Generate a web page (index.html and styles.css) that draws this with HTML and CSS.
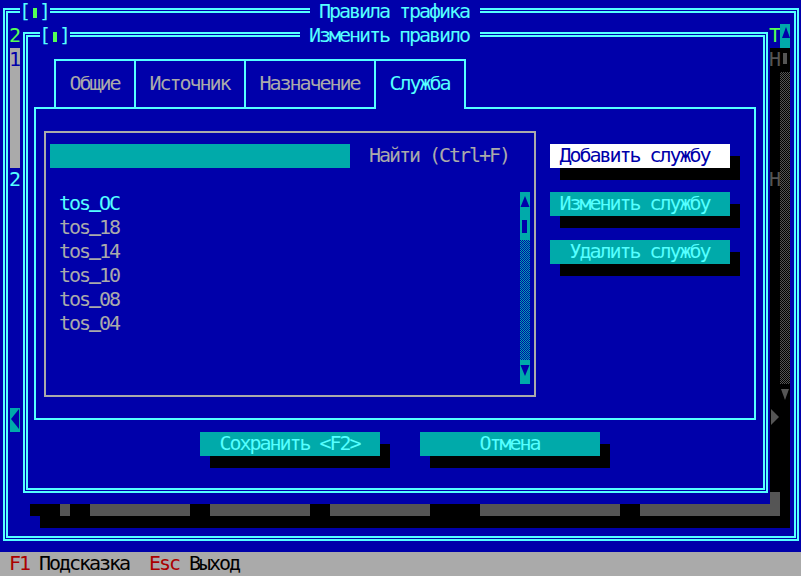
FILE: index.html
```html
<!DOCTYPE html>
<html lang="ru">
<head>
    <meta charset="UTF-8">
    <meta name="viewport" content="width=device-width, initial-scale=1.0">
    <title>Правила трафика</title>
    <link rel="stylesheet" href="styles.css">
</head>
<body>
    <div class="screen">
        <!-- Background window: Правила трафика -->
        <div class="frame outer-frame"></div>
        <div class="marker outer-marker">[<i class="grip"></i>]</div>
        <div class="caption outer-caption">Правила трафика</div>

        <div class="win-num">2</div>
        <div class="list-bar">1</div>
        <div class="list-num">2</div>
        <div class="left-arrow">
            <svg class="icon" width="10" height="24" viewBox="0 0 10 24"><path d="M9 1v20L1 11z" fill="#0000aa"/></svg>
        </div>

        <div class="win-t">T</div>
        <div class="win-up">
            <svg class="icon" width="10" height="24" viewBox="0 0 10 24"><path d="M6 3l4 11H2z" fill="#0000aa"/></svg>
        </div>

        <!-- Dialog shadow over the background window -->
        <div class="shadow-col">
            <span class="dim dim-h1">H</span>
            <span class="dim-bar"><i></i></span>
            <span class="dim-track"></span>
            <span class="dim dim-h2">H</span>
            <span class="dim-down">
                <svg class="icon" width="10" height="24" viewBox="0 0 10 24"><path d="M1 5h8l-4 11z" fill="#555555"/></svg>
            </span>
            <span class="dim-right">
                <svg class="icon" width="10" height="24" viewBox="0 0 10 24"><path d="M1 1v16l8-8z" fill="#555555"/></svg>
            </span>
            <span class="dim-half"></span>
        </div>
        <div class="shadow-row">
            <span class="sh-edge w1"></span>
            <span class="sh w2"></span>
            <span class="sh-top w1"></span>
            <span class="sh w2"></span>
            <span class="sh-top w10"></span>
            <span class="sh w2"></span>
            <span class="sh-top w10"></span>
            <span class="sh w2"></span>
            <span class="sh-top w10"></span>
            <span class="sh w5"></span>
            <span class="sh-top w14"></span>
            <span class="sh w2"></span>
            <span class="sh-top w14"></span>
            <span class="sh w1"></span>
        </div>

        <!-- Dialog: Изменить правило -->
        <div class="dialog">
            <div class="frame"></div>
            <div class="marker dlg-marker">[<i class="grip"></i>]</div>
            <div class="caption dlg-caption">Изменить правило</div>

            <div class="panel"></div>
            <div class="tabs">
                <div class="tab tab-general">Общие</div>
                <div class="tab tab-source">Источник</div>
                <div class="tab tab-target">Назначение</div>
                <div class="tab tab-service active">Служба</div>
            </div>

            <div class="group"></div>
            <div class="search"></div>
            <div class="search-label">Найти (Ctrl+F)</div>

            <ul class="list">
                <li class="selected">tos<span class="us">_</span>OC</li>
                <li>tos<span class="us">_</span>18</li>
                <li>tos<span class="us">_</span>14</li>
                <li>tos<span class="us">_</span>10</li>
                <li>tos<span class="us">_</span>08</li>
                <li>tos<span class="us">_</span>04</li>
            </ul>

            <div class="scroll">
                <div class="sb-cell">
                    <svg class="icon" width="10" height="24" viewBox="0 0 10 24"><path d="M5 4l4.5 11h-9z" fill="#0000aa"/></svg>
                </div>
                <div class="sb-cell"><i class="sb-thumb"></i></div>
                <div class="sb-track"></div>
                <div class="sb-cell">
                    <svg class="icon" width="10" height="24" viewBox="0 0 10 24"><path d="M0.5 5h9L5 16z" fill="#0000aa"/></svg>
                </div>
            </div>

            <div class="actions">
                <button class="btn btn-default pad-odd">Добавить службу</button>
                <button class="btn pad-odd">Изменить службу</button>
                <button class="btn">Удалить службу</button>
            </div>

            <div class="footer">
                <button class="btn">Сохранить &lt;F2&gt;</button>
                <button class="btn">Отмена</button>
            </div>
        </div>
    </div>

    <div class="status"> <span class="key">F1</span> Подсказка  <span class="key">Esc</span> Выход</div>
</body>
</html>
```

FILE: styles.css
```css
* {
    box-sizing: border-box;
}

body {
    margin: 0;
    width: 801px;
    height: 576px;
    overflow: hidden;
    background: #0000aa;
    color: #aaaaaa;
    font-family: "DejaVu Sans Mono", monospace;
    font-size: 20px;
    letter-spacing: -2.041px;
    line-height: 22px;
    text-indent: -1px;
}

/* 80 x 23 character cells, 10 x 24 px each */
.screen {
    display: grid;
    grid-template-columns: repeat(79, 10px) 11px;
    grid-template-rows: repeat(23, 24px);
}

.icon {
    display: block;
}

.frame {
    grid-area: 1 / 1 / -1 / -1;
    margin: 8px 2px 11px 3px;
    border: 5px double #55ffff;
}

.outer-frame {
    grid-area: 1 / 1 / 24 / 81;
}

.marker {
    color: #55ffff;
    background: #0000aa;
}

.grip {
    display: inline-block;
    width: 4px;
    height: 10px;
    margin: 0 2px 0 4px;
    background: #55ff55;
}

.caption {
    color: #55ffff;
    background: #0000aa;
    padding: 0 10px;
}

.outer-marker {
    grid-area: 1 / 3 / 2 / 6;
}

.outer-caption {
    grid-area: 1 / 32 / 2 / 49;
}

/* left edge of the background window */
.win-num {
    grid-area: 2 / 2 / 3 / 3;
    color: #55ff55;
}

.list-bar {
    grid-area: 3 / 2 / 8 / 3;
    background: #aaaaaa;
    color: #0000aa;
}

.list-num {
    grid-area: 8 / 2 / 9 / 3;
    color: #55ffff;
}

.left-arrow {
    grid-area: 18 / 2 / 19 / 3;
    background: #00aaaa;
}

/* right edge of the background window */
.win-t {
    grid-area: 2 / 78 / 3 / 79;
    color: #55ff55;
}

.win-up {
    grid-area: 2 / 79 / 3 / 80;
    background: #00aaaa;
}

.shadow-col {
    grid-area: 3 / 78 / 22 / 80;
    display: grid;
    grid-template-columns: 10px 10px;
    grid-template-rows: repeat(19, 24px);
    background: #000;
}

.dim {
    color: #555555;
}

.dim-h1 {
    grid-area: 1 / 1;
}

.dim-h2 {
    grid-area: 6 / 1;
}

.dim-bar {
    grid-area: 1 / 2;
}

.dim-bar i {
    display: block;
    width: 4px;
    height: 11px;
    margin: 5px 0 0 3px;
    background: #555555;
}

.dim-track {
    grid-area: 2 / 2 / 15 / 3;
    background: repeating-conic-gradient(#555555 0 25%, #000 0 50%) 0 0 / 2px 2px;
}

.dim-down {
    grid-area: 15 / 2;
}

.dim-right {
    grid-area: 16 / 1;
}

.dim-half {
    grid-area: 19 / 1;
    background: linear-gradient(transparent 50%, #555555 50%);
}

.shadow-row {
    grid-area: 22 / 4 / 23 / 80;
    display: flex;
}

.shadow-row span {
    flex-shrink: 0;
    height: 24px;
}

.sh {
    background: #000;
}

.sh-top {
    background: linear-gradient(#555555 50%, #000 50%);
}

.sh-edge {
    background: linear-gradient(#000 50%, transparent 50%);
}

.w1 { width: 10px; }
.w2 { width: 20px; }
.w5 { width: 50px; }
.w10 { width: 100px; }
.w14 { width: 140px; }

/* dialog window */
.dialog {
    grid-area: 2 / 3 / 22 / 78;
    display: grid;
    grid-template-columns: repeat(75, 10px);
    grid-template-rows: repeat(20, 24px);
}

.dlg-marker {
    grid-area: 1 / 3 / 2 / 6;
}

.dlg-caption {
    grid-area: 1 / 29 / 2 / 47;
}

.panel {
    grid-area: 4 / 2 / 18 / 75;
    margin: 11px 4px 12px 4px;
    border: 2px solid #55ffff;
}

.tabs {
    grid-area: 2 / 4 / 5 / 46;
    margin: 11px 4px;
    display: flex;
    border-top: 2px solid #55ffff;
}

.tab {
    flex-shrink: 0;
    padding-top: 11px;
    text-align: center;
    border-left: 2px solid #55ffff;
}

.tab-general { width: 80px; }
.tab-source { width: 110px; }
.tab-target { width: 130px; }

.tab-service {
    flex: 1;
    border-right: 2px solid #55ffff;
}

.tab.active {
    background: #0000aa;
    color: #55ffff;
}

.group {
    grid-area: 5 / 3 / 17 / 53;
    margin: 11px 4px;
    border: 2px solid #aaaaaa;
}

.search {
    grid-area: 6 / 4 / 7 / 34;
    background: #00aaaa;
}

.search-label {
    grid-area: 6 / 36 / 7 / 50;
}

.list {
    grid-area: 8 / 5 / 14 / 20;
    margin: 0;
    padding: 0;
    list-style: none;
}

.list li {
    height: 24px;
}

.list li.selected {
    color: #55ffff;
}

/* the underscore sits on the baseline in the screen font */
.us {
    vertical-align: 3px;
    line-height: 0;
    font-weight: bold;
}

.scroll {
    grid-area: 8 / 51 / 16 / 52;
    display: flex;
    flex-direction: column;
    background: #00aaaa;
}

.sb-cell {
    height: 24px;
}

.sb-thumb {
    display: block;
    width: 5px;
    height: 13px;
    margin: 4px 0 0 2px;
    background: #0000aa;
}

.sb-track {
    flex: 1;
    background: repeating-conic-gradient(#00aaaa 0 25%, #0000aa 0 50%) 0 0 / 2px 2px;
}

.actions {
    grid-area: 6 / 54 / 12 / 73;
    display: flex;
    flex-direction: column;
    align-items: flex-start;
    gap: 24px;
}

.footer {
    grid-area: 18 / 19 / 19 / 60;
    display: flex;
    gap: 40px;
}

.btn {
    width: 180px;
    height: 24px;
    padding: 0 0 2px;
    border: none;
    background: #00aaaa;
    color: #55ffff;
    font: inherit;
    line-height: 22px;
    letter-spacing: inherit;
    text-indent: inherit;
    text-align: center;
    box-shadow: 10px 12px 0 #000;
    cursor: pointer;
}

.btn-default {
    background: #ffffff;
    color: #0000aa;
}

.pad-odd {
    padding-right: 10px;
}

/* status line */
.status {
    height: 24px;
    background: #aaaaaa;
    color: #000;
    white-space: pre;
}

.status .key {
    color: #aa0000;
}
```
